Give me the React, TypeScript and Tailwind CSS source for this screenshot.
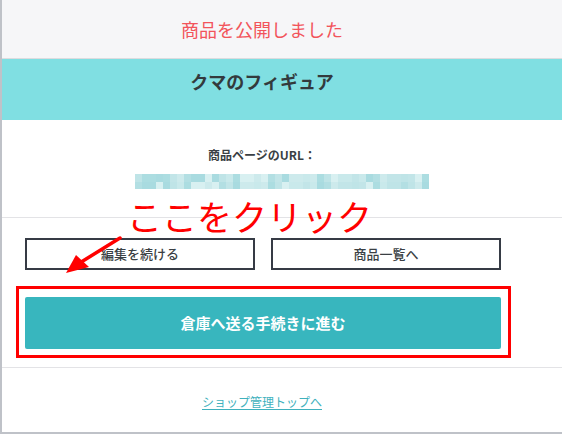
const font = { fontFamily: '"Noto Sans CJK JP", "Noto Sans", sans-serif' };

const PIXEL_COLORS = ["#bfe4e7", "#a9dbe0", "#c9e9eb", "#b3dfe3", "#d8f0f1", "#c2e5e8", "#acdde1", "#cdeaec"];

function PixelBar() {
  const cols = 42;
  const rows = [0, 1];
  return (
    <div className="ml-[133px] flex w-[294px] flex-col">
      {rows.map((r) => (
        <div key={r} className="flex h-[7.5px]">
          {Array.from({ length: cols }).map((_, i) => (
            <div
              key={i}
              className="h-full w-[7px]"
              style={{ backgroundColor: PIXEL_COLORS[(i * 5 + r * 3 + ((i * i) % 7)) % PIXEL_COLORS.length] }}
            />
          ))}
        </div>
      ))}
    </div>
  );
}

export default function App() {
  return (
    <div
      className="relative h-[434px] w-[562px] overflow-hidden border-b-2 border-l-2 border-[#bfc2c8] bg-white"
      style={font}
    >
      {/* header */}
      <div className="h-[59px] border-b border-[#dcdcdf] bg-[#f6f6f8]">
        <div className="flex h-[58px] w-[520px] items-center justify-center text-[18px] text-[#f2545b]">
          商品を公開しました
        </div>
      </div>

      {/* item name */}
      <div className="h-[61px] bg-[#80dfe2] pt-[9px]">
        <div className="w-[520px] text-center text-[18px] font-bold leading-[27px] text-[#333a3d]">
          クマのフィギュア
        </div>
      </div>

      {/* url */}
      <div className="border-b border-[#e3e3e6] pt-[26px] pb-[28px]">
        <div className="w-[520px]">
          <p className="text-center text-[12px] font-bold leading-[18px] text-[#3a3f44]">商品ページのURL：</p>
          <div className="mt-[10px] h-[15px]">
            <PixelBar />
          </div>
        </div>
      </div>

      {/* actions */}
      <div className="border-b border-[#e3e3e6] px-[23px] pt-[20px] pb-[18px]">
        <div className="w-[476px]">
          <div className="grid grid-cols-2 gap-[16px]">
            <button className="h-[32px] border-2 border-[#363b45] text-[13px] font-medium text-[#3a3f44]">
              編集を続ける
            </button>
            <button className="h-[32px] border-2 border-[#363b45] text-[13px] font-medium text-[#3a3f44]">
              商品一覧へ
            </button>
          </div>
          <button className="mt-[27px] h-[52px] w-full rounded-[2px] bg-[#38b6be] text-[15px] font-bold text-white">
            倉庫へ送る手続きに進む
          </button>
        </div>
      </div>

      {/* shop link */}
      <div className="pt-[20px]">
        <div className="w-[520px] text-center">
          <a className="text-[12px] leading-[20px] text-[#3fb1bd] underline underline-offset-2">
            ショップ管理トップへ
          </a>
        </div>
      </div>

      {/* annotation */}
      <div className="absolute left-[14px] top-[286px] h-[72px] w-[495px] border-[3px] border-[#ff0000]" />
      <div className="absolute left-[125px] top-[198px] text-[35px] leading-[35px] text-[#ff0000]">ここをクリック</div>
      <svg className="absolute left-0 top-0" width="562" height="434" viewBox="0 0 562 434">
        <line x1="118" y1="238" x2="76" y2="264" stroke="#ff0000" strokeWidth="3.5" strokeLinecap="round" />
        <polygon points="64,273 74,255 87,267" fill="#ff0000" />
      </svg>
    </div>
  );
}
